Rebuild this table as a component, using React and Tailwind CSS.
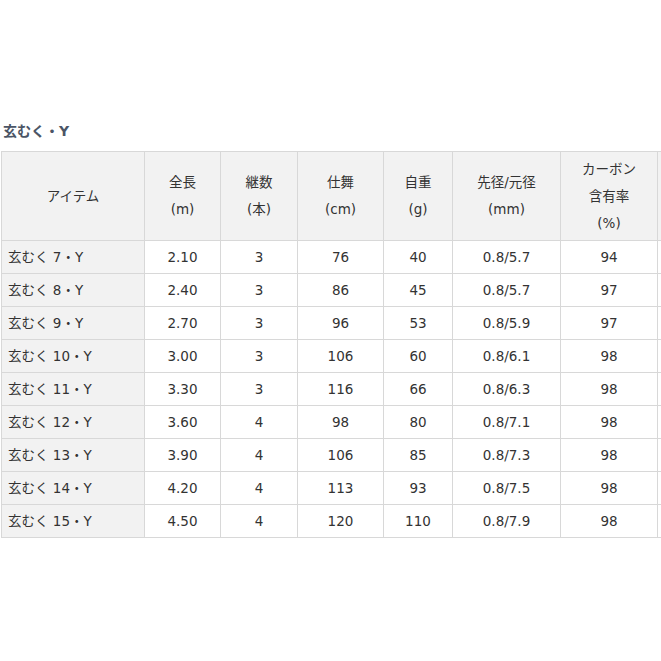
import React from 'react';

const rows = [
  ['玄むく 7・Y', '2.10', '3', '76', '40', '0.8/5.7', '94'],
  ['玄むく 8・Y', '2.40', '3', '86', '45', '0.8/5.7', '97'],
  ['玄むく 9・Y', '2.70', '3', '96', '53', '0.8/5.9', '97'],
  ['玄むく 10・Y', '3.00', '3', '106', '60', '0.8/6.1', '98'],
  ['玄むく 11・Y', '3.30', '3', '116', '66', '0.8/6.3', '98'],
  ['玄むく 12・Y', '3.60', '4', '98', '80', '0.8/7.1', '98'],
  ['玄むく 13・Y', '3.90', '4', '106', '85', '0.8/7.3', '98'],
  ['玄むく 14・Y', '4.20', '4', '113', '93', '0.8/7.5', '98'],
  ['玄むく 15・Y', '4.50', '4', '120', '110', '0.8/7.9', '98'],
];

const th = 'border border-[#d8d8d8] font-normal leading-[27px]';

export default function App() {
  return (
    <div className="w-[661px] h-[661px] bg-white overflow-hidden text-[#333] font-['DejaVu_Sans','Noto_Sans_CJK_JP',sans-serif]">
      <div className="pt-[122px] pl-[3px] text-[14px] font-bold text-[#4b5566] leading-[18px]">玄むく・Y</div>
      <table className="mt-[11px] ml-[1px] w-[664px] border-collapse table-fixed text-[13.5px]">
        <colgroup>
          <col className="w-[143px]" />
          <col className="w-[76px]" />
          <col className="w-[77px]" />
          <col className="w-[86px]" />
          <col className="w-[69px]" />
          <col className="w-[108px]" />
          <col className="w-[97px]" />
          <col className="w-[8px]" />
        </colgroup>
        <thead>
          <tr className="h-[89px] bg-[#f2f2f2]">
            <th className={th}>アイテム</th>
            <th className={th}>全長<br />(m)</th>
            <th className={th}>継数<br />(本)</th>
            <th className={th}>仕舞<br />(cm)</th>
            <th className={th}>自重<br />(g)</th>
            <th className={th}>先径/元径<br />(mm)</th>
            <th className={th}>カーボン<br />含有率<br />(%)</th>
            <th className="border border-[#d8d8d8]"></th>
          </tr>
        </thead>
        <tbody>
          {rows.map((r) => (
            <tr key={r[0]} className="h-[33px]">
              <td className="border border-[#d8d8d8] bg-[#f2f2f2] pl-[6px] text-left whitespace-nowrap">{r[0]}</td>
              {r.slice(1).map((c, i) => (
                <td key={i} className="border border-[#d8d8d8] text-center">{c}</td>
              ))}
              <td className="border border-[#d8d8d8]"></td>
            </tr>
          ))}
        </tbody>
      </table>
    </div>
  );
}
